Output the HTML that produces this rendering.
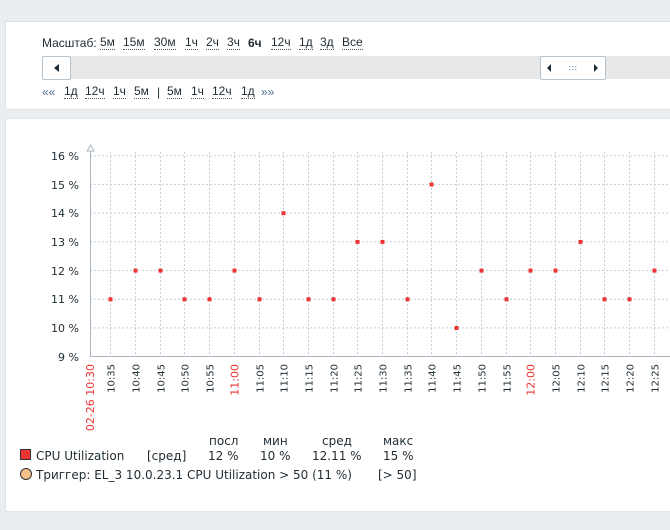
<!DOCTYPE html>
<html><head><meta charset="utf-8"><style>
body{margin:0;width:670px;height:530px;background:#ebeef0;position:relative;overflow:hidden;font-family:"Liberation Sans",sans-serif;}
.p{position:absolute;background:#fff;border:1px solid #dfe4e7;}
.t{position:absolute;font-size:12px;color:#1f2c33;white-space:nowrap;}
.l{border-bottom:1px dotted #555;line-height:13px}
.b{position:absolute;background:#fff;border:1px solid #b6c2cc;border-radius:2px;box-sizing:border-box}
</style></head><body>
<div class="p" style="left:5px;top:21px;width:670px;height:87px"></div>
<div class="p" style="left:5px;top:118px;width:670px;height:392px"></div>
<div class="t" style="left:42px;top:36px">Масштаб:</div>
<div class="t l" style="left:100px;top:36px">5м</div>
<div class="t l" style="left:123px;top:36px">15м</div>
<div class="t l" style="left:154px;top:36px">30м</div>
<div class="t l" style="left:185px;top:36px">1ч</div>
<div class="t l" style="left:206px;top:36px">2ч</div>
<div class="t l" style="left:227px;top:36px">3ч</div>
<div class="t" style="left:248px;top:36px;font-weight:bold">6ч</div>
<div class="t l" style="left:271px;top:36px">12ч</div>
<div class="t l" style="left:299px;top:36px">1д</div>
<div class="t l" style="left:320px;top:36px">3д</div>
<div class="t l" style="left:342px;top:36px">Все</div>
<div style="position:absolute;left:42px;top:56px;width:628px;height:23px;background:#e8e8e8"></div>
<div class="b" style="left:42px;top:56px;width:29px;height:24px"><svg width="27" height="22"><path d="M11 11 L16 7 L16 15Z" fill="#1f2c33"/></svg></div>
<div class="b" style="left:540px;top:56px;width:66px;height:24px"><svg width="64" height="22"><path d="M6 11 L10 7 L10 15Z" fill="#1f2c33"/><path d="M57 11 L53 7 L53 15Z" fill="#1f2c33"/><g fill="#9aa8b4"><rect x="28" y="9" width="1.3" height="1.3"/><rect x="31" y="9" width="1.3" height="1.3"/><rect x="34" y="9" width="1.3" height="1.3"/><rect x="28" y="12" width="1.3" height="1.3"/><rect x="31" y="12" width="1.3" height="1.3"/><rect x="34" y="12" width="1.3" height="1.3"/></g></svg></div>
<div class="t" style="left:42px;top:85px;color:#4c6d8c">««</div>
<div class="t l" style="left:64px;top:85px">1д</div>
<div class="t l" style="left:85px;top:85px">12ч</div>
<div class="t l" style="left:113px;top:85px">1ч</div>
<div class="t l" style="left:134px;top:85px">5м</div>
<div class="t" style="left:157px;top:85px">|</div>
<div class="t l" style="left:167px;top:85px">5м</div>
<div class="t l" style="left:191px;top:85px">1ч</div>
<div class="t l" style="left:212px;top:85px">12ч</div>
<div class="t l" style="left:241px;top:85px">1д</div>
<div class="t" style="left:261px;top:85px;color:#4c6d8c">»»</div>

<svg style="position:absolute;left:0;top:0" width="670" height="530" font-family="DejaVu Sans, sans-serif">
<g stroke="#c5cfd8" stroke-dasharray="2,2" stroke-width="1">
<line x1="90" x2="670" y1="155.7" y2="155.7"/><line x1="90" x2="670" y1="184.4" y2="184.4"/><line x1="90" x2="670" y1="213.1" y2="213.1"/><line x1="90" x2="670" y1="241.8" y2="241.8"/><line x1="90" x2="670" y1="270.5" y2="270.5"/><line x1="90" x2="670" y1="299.2" y2="299.2"/><line x1="90" x2="670" y1="327.9" y2="327.9"/>
</g>
<g id="vg" stroke="#c5cfd8" stroke-dasharray="2,2"></g>
<line x1="90.5" y1="150" x2="90.5" y2="357" stroke="#aab7c2"/>
<line x1="90" y1="356.5" x2="670" y2="356.5" stroke="#aab7c2"/>
<path d="M87 151 L90.5 145 L94 151Z" fill="#fff" stroke="#aab7c2"/>
<g font-size="11" fill="#1f2c33" text-anchor="end">
<text x="79" y="160">16 %</text><text x="79" y="189">15 %</text><text x="79" y="217">14 %</text><text x="79" y="246">13 %</text><text x="79" y="275">12 %</text><text x="79" y="303">11 %</text><text x="79" y="332">10 %</text><text x="79" y="361">9 %</text>
</g>
<g id="xl" font-size="10" fill="#1f2c33" text-anchor="end"></g>
<g id="pts" fill="#e33"></g>
<rect x="20.5" y="449.5" width="10" height="10" fill="#e33" stroke="#333"/>
<circle cx="26" cy="474" r="5.5" fill="#f8c08a" stroke="#333"/>
<g font-size="12" fill="#1f2c33">
<text x="209" y="445">посл</text><text x="263" y="445">мин</text><text x="322" y="445">сред</text><text x="383" y="445">макс</text>
<text x="36" y="460">CPU Utilization</text><text x="147" y="460">[сред]</text>
<text x="208" y="460">12 %</text><text x="260" y="460">10 %</text><text x="312" y="460">12.11 %</text><text x="383" y="460">15 %</text>
<text x="36" y="479">Триггер: EL_3 10.0.23.1  CPU Utilization &gt; 50 (11 %)</text><text x="378" y="479">[&gt; 50]</text>
</g>
</svg>
<script>
var vals=[11,12,12,11,11,12,11,14,11,11,13,13,11,15,10,12,11,12,12,13,11,11,12];
var lab=["10:35","10:40","10:45","10:50","10:55","11:00","11:05","11:10","11:15","11:20","11:25","11:30","11:35","11:40","11:45","11:50","11:55","12:00","12:05","12:10","12:15","12:20","12:25"];
var ns="http://www.w3.org/2000/svg",vg=document.getElementById("vg"),xl=document.getElementById("xl"),pts=document.getElementById("pts");
function el(t,a,p){var e=document.createElementNS(ns,t);for(var k in a)e.setAttribute(k,a[k]);p.appendChild(e);return e;}
var d=el("text",{transform:"translate(94,364) rotate(-90)",fill:"#e33","font-size":"11"},xl);d.textContent="02-26 10:30";
for(var i=0;i<23;i++){var x=Math.round(110.3+i*24.7)+0.5;
el("line",{x1:x,x2:x,y1:152,y2:356},vg);
var red=(lab[i]=="11:00"||lab[i]=="12:00");
var t=el("text",{transform:"translate("+(x+4)+",364) rotate(-90)",fill:red?"#e33":"#1f2c33","font-size":red?"11":"10"},xl);t.textContent=lab[i];
var y=356.7-(vals[i]-9)*28.7;el("rect",{x:x-2,y:y-2,width:4,height:4},pts);}
</script>
</body></html>
